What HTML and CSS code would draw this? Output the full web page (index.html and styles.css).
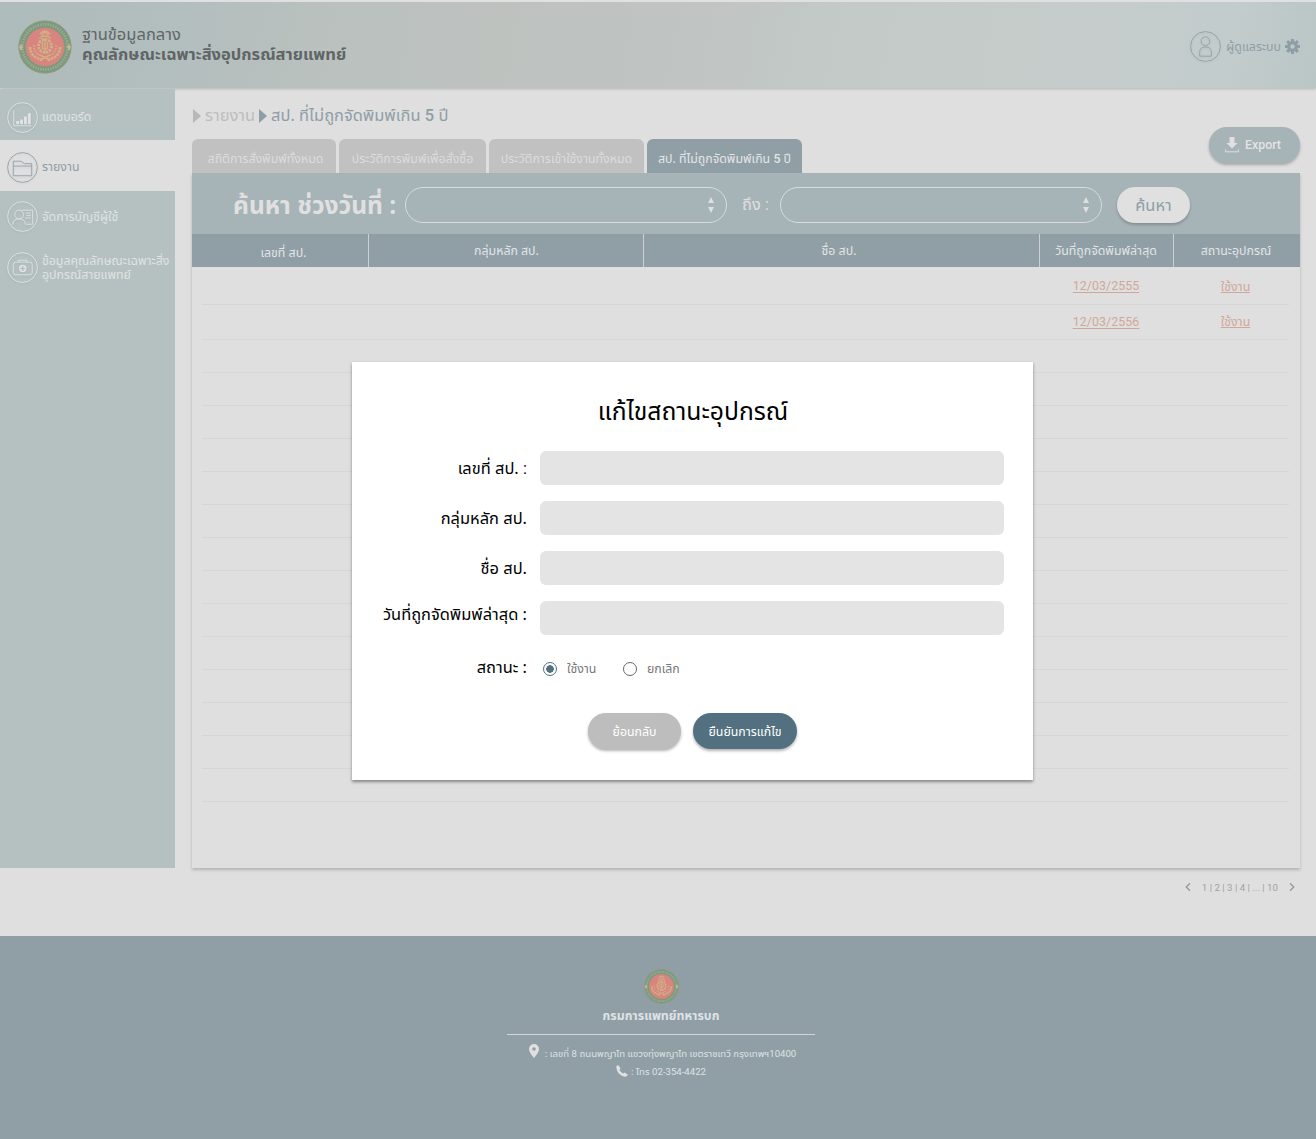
FILE: index.html
```html
<!DOCTYPE html>
<html lang="th">
<head>
<meta charset="utf-8">
<title>แก้ไขสถานะอุปกรณ์</title>
<link rel="stylesheet" href="styles.css">
</head>
<body>
<svg width="0" height="0" class="defs" aria-hidden="true">
  <symbol id="emblem" viewBox="0 0 54 54">
    <circle cx="27" cy="27" r="26.5" fill="#799880"/>
    <circle cx="27" cy="27" r="26" fill="none" stroke="#969f78" stroke-width=".8"/>
    <circle cx="27" cy="27" r="22.6" fill="none" stroke="#b2b591" stroke-width="3" stroke-dasharray="1.5 1.1" pathLength="142" opacity=".62"/>
    <circle cx="27" cy="27" r="19.3" fill="#d98480" stroke="#a69777" stroke-width=".7"/>
    <path d="M3 24l2 3-2 4-2-4zM51 24l2 3-2 4-2-4z" fill="#c2b891"/>
    <g fill="none" stroke="#cfb184" stroke-width="1.4">
      <path d="M22 14q5-6 10 0M23.500 15.500l3.500-4 3.500 4M21 18.500q6-5 12 0"/>
      <circle cx="27" cy="26" r="6.500" stroke-width="3" stroke-dasharray="2.400 .9"/>
      <path d="M27 18v15M24.500 22v6q2.500 3 5 0v-6"/>
      <path d="M12 27q0 10 13 13M42 27q0 10-13 13" stroke-width="2.800" stroke-dasharray="2.600 .8"/>
      <path d="M16 25q-1 8 8 11M38 25q1 8-8 11" stroke-dasharray="2 .8"/>
      <path d="M22 35l10 5M32 35l-10 5"/>
    </g>
  </symbol>
</svg>

<header class="header">
  <svg class="header-logo"><use href="#emblem"/></svg>
  <div class="brand"><div class="brand-top">ฐานข้อมูลกลาง</div><div class="brand-name">คุณลักษณะเฉพาะสิ่งอุปกรณ์สายแพทย์</div></div>
  <div class="user">
    <svg class="circle-icon" viewBox="0 0 32 32"><circle cx="16" cy="16" r="15.400"/><circle cx="16" cy="10.500" r="4.500"/><path d="M10 26v-4q0-5.500 6-5.500t6 5.500V26z"/></svg>
    <span class="user-name">ผู้ดูแลระบบ</span>
    <svg class="gear" viewBox="0 0 16 16"><circle cx="8" cy="8" r="4.100" fill="none" stroke="#8e9ea6" stroke-width="3.400"/><path d="M8 0v3M8 13v3M0 8h3M13 8h3M2.300 2.300l2.100 2.100M11.600 11.600l2.100 2.100M2.300 13.700l2.100-2.100M11.600 4.400l2.100-2.100" stroke="#8e9ea6" stroke-width="3.200"/></svg>
  </div>
</header>

<div class="body">
  <nav class="sidebar">
    <a class="nav nav-first">
      <svg class="circle-icon" viewBox="0 0 32 32"><circle cx="16" cy="16" r="15.400"/><path d="M7 9v15.500H25"/><path class="solid" d="M9.500 19.500h3v3.500h-3zM13.500 18h3v5h-3zM17.500 15h3v8h-3zM21.500 11.500h3V23h-3z"/></svg>
      <span>แดชบอร์ด</span></a>
    <a class="nav nav-active">
      <svg class="circle-icon" viewBox="0 0 32 32"><circle cx="16" cy="16" r="15.400"/><path d="M6.500 24.500v-15H14.500l3.500 2.500h7.500v12.500zM6.500 14.500h19"/></svg>
      <span>รายงาน</span></a>
    <a class="nav nav-users">
      <svg class="circle-icon" viewBox="0 0 32 32"><circle cx="16" cy="16" r="15.400"/><circle cx="12.500" cy="14" r="4.500"/><path d="M6 24.500q0-6 6.500-6t6.500 6M15.500 9.500H26.500V24H20M19.500 12.500h5M20 15h4.500M19 17.500h5.500"/></svg>
      <span>จัดการบัญชีผู้ใช้</span></a>
    <a class="nav nav-kit">
      <svg class="circle-icon" viewBox="0 0 32 32"><circle cx="16" cy="16" r="15.400"/><rect x="6.500" y="10.500" width="19.500" height="13" rx="2.500"/><path d="M12 10.500V8.500h8.500v2"/><circle class="solid" cx="16.200" cy="17" r="3.900"/><path class="cut" d="M16.200 14.500v5M13.700 17h5"/></svg>
      <span>ข้อมูลคุณลักษณะเฉพาะสิ่ง<br>อุปกรณ์สายแพทย์</span></a>
  </nav>

  <main class="main">
    <div class="crumbs"><i class="tri"></i><span class="crumb-a">รายงาน</span><i class="tri tri-dark"></i><span class="crumb-b">สป. ที่ไม่ถูกจัดพิมพ์เกิน <b>5</b> ปี</span></div>
    <div class="tabbar">
      <div class="tab t1"><span>สถิติการสั่งพิมพ์ทั้งหมด</span></div>
      <div class="tab t2"><span>ประวัติการพิมพ์เพื่อสั่งซื้อ</span></div>
      <div class="tab t3"><span>ประวัติการเข้าใช้งานทั้งหมด</span></div>
      <div class="tab t4"><span>สป. ที่ไม่ถูกจัดพิมพ์เกิน <b>5</b> ปี</span></div>
      <button class="export"><svg viewBox="0 0 14 16"><path d="M4.500 0h5v6h3.200L7 11.500 1.300 6h3.200z" fill="#e0e0e0"/><path d="M.6 12.500v2.300h12.800v-2.300" fill="none" stroke="#e0e0e0"/></svg><span>Export</span></button>
    </div>
    <section class="panel">
      <div class="search">
        <span class="search-title">ค้นหา ช่วงวันที่ :</span>
        <div class="select"><i class="up"></i><i class="down"></i></div>
        <span class="to">ถึง <span class="colon">:</span></span>
        <div class="select"><i class="up"></i><i class="down"></i></div>
        <button class="find"><span>ค้นหา</span></button>
      </div>
      <div class="thead grid"><div class="h1"><span>เลขที่ สป.</span></div><div class="h2"><span>กลุ่มหลัก สป.</span></div><div class="h3"><span>ชื่อ สป.</span></div><div class="h4"><span>วันที่ถูกจัดพิมพ์ล่าสุด</span></div><div class="h5"><span>สถานะอุปกรณ์</span></div></div>
      <div class="rows">
        <div class="row tall grid"><a class="date">12/03/2555</a><a class="use">ใช้งาน</a></div>
        <div class="row second grid"><a class="date">12/03/2556</a><a class="use">ใช้งาน</a></div>
        <div class="row"></div><div class="row"></div><div class="row"></div><div class="row"></div><div class="row"></div><div class="row"></div><div class="row"></div><div class="row"></div><div class="row"></div><div class="row"></div><div class="row"></div><div class="row"></div><div class="row"></div><div class="row"></div>
      </div>
    </section>
    <div class="pager"><svg viewBox="0 0 6 8"><path d="M5 .3L1.300 4 5 7.700"/></svg><span>1 | 2 | 3 | 4 | ... | 10</span><svg viewBox="0 0 6 8"><path d="M1 .3L4.700 4 1 7.700"/></svg></div>
  </main>
</div>

<footer class="footer">
  <svg class="footer-logo"><use href="#emblem"/></svg>
  <div class="dept">กรมการแพทย์ทหารบก</div>
  <div class="rule"></div>
  <div class="contact"><svg class="pin" viewBox="0 0 10 14"><path fill-rule="evenodd" d="M5 0a5 5 0 0 1 5 5c0 3.500-5 9-5 9S0 8.500 0 5a5 5 0 0 1 5-5zm0 3.200a1.800 1.800 0 1 0 0 3.600 1.800 1.800 0 0 0 0-3.600z"/></svg><span class="addr">: เลขที่ <i class="num">8</i> ถนนพญาไท แขวงทุ่งพญาไท เขตราชเทวี กรุงเทพฯ<i class="num">10400</i></span></div>
  <div class="contact phone-line"><svg class="phone" viewBox="0 0 12 12"><path d="M.3 1.500Q1 .2 2.500.2L4.500 3.500 3.400 4.900Q4.800 7.300 7.100 8.600L8.500 7.500 11.800 9.500Q11.700 11.500 9.500 11.800C4.500 11.500.2 6.500.3 1.500z"/></svg><span class="tel">: โทร <i class="num">02-354-4422</i></span></div>
</footer>

<div class="modal">
  <h1><span>แก้ไขสถานะอุปกรณ์</span></h1>
  <div class="field"><label>เลขที่ สป. <span class="colon">:</span></label><div class="input"></div></div>
  <div class="field"><label>กลุ่มหลัก สป.</label><div class="input"></div></div>
  <div class="field"><label>ชื่อ สป.</label><div class="input"></div></div>
  <div class="field"><label class="l4">วันที่ถูกจัดพิมพ์ล่าสุด :</label><div class="input"></div></div>
  <div class="field status"><label>สถานะ :</label><i class="radio on"></i><span class="o1">ใช้งาน</span><i class="radio"></i><span class="o2">ยกเลิก</span></div>
  <div class="actions"><button class="back"><span>ย้อนกลับ</span></button><button class="confirm"><span>ยืนยันการแก้ไข</span></button></div>
</div>
</body>
</html>
```
FILE: styles.css
```css
* { box-sizing: border-box; }
body { margin: 0; width: 1316px; height: 1139px; overflow: hidden; position: relative; background: #dfdfdf; font-family: "Noto Sans Thai", "Noto Sans", sans-serif; font-size: 12.350px; color: #fff; }
span, label, a { white-space: nowrap; }
b { font-family: Roboto, sans-serif; font-weight: 500; }
button { border: 0; padding: 0; font: inherit; color: inherit; display: flex; align-items: center; justify-content: center; }
.defs { display: block; height: 0; }
.colon, .num { font-family: Roboto, sans-serif; font-weight: 400; font-style: normal; }
.header { height: 88px; margin-bottom: 1px; border-top: 2px solid #e0e0e0; display: flex; align-items: flex-start; padding-left: 18px; background: linear-gradient(100deg, #aebbbb 0%, #b3bebe 14%, #bbc1be 27%, #bfc3c1 50%, #c3cac7 64%, #c5cccb 84%, #c2cccc 93%, #bac5c5 100%); box-shadow: 0 1px 3px rgba(0,0,0,.2); }
.header-logo { width: 54px; height: 54px; margin-top: 18px; }
.brand { margin: 23px 0 0 10px; color: #606565; line-height: 19.500px; font-size: 16.500px; }
.brand-name { font-weight: 700; }
.user { margin: 29px 16px 0 auto; display: flex; align-items: center; color: #8e9ea6; }
.circle-icon { width: 31px; height: 31px; flex: none; fill: none; stroke: currentColor; stroke-width: .9; filter: drop-shadow(0 1px 1px rgba(0,0,0,.08)); }
.circle-icon .solid { fill: currentColor; stroke: none; }
.circle-icon .cut { stroke: #b5c1c1; stroke-width: 1.500; }
.user-name { margin: 1px 4px 0 5px; font-size: 12.350px; }
.gear { width: 15px; height: 15px; }
.body { display: flex; height: 847px; }
.sidebar { width: 175px; height: 779px; background: #b5c1c1; color: #dfe3e3; flex: none; }
.nav { display: flex; align-items: center; padding-left: 7px; gap: 4px; height: 50px; line-height: 14px; }
.nav-first { height: 51px; padding-top: 6px; }
.nav-active { height: 51px; background: #dfdfdf; color: #8e9ea6; padding-top: 3px; }
.nav-active span, .nav-users span { padding-top: 2px; }
.nav-users { height: 51px; }
.nav-kit { height: 50px; }
.nav-kit span { padding-top: 4px; }
.main { width: 1108px; margin-left: 17px; }
.crumbs { height: 50px; display: flex; align-items: center; font-size: 16.450px; padding-top: 3px; }
.tri { width: 0; height: 0; border: 7px solid transparent; border-left: 8px solid #b8b8b8; border-right: 0; margin: 0 4px 0 1px; }
.tri-dark { border-left-color: #8e9ea6; margin: 0 4px 0 4px; }
.crumb-a { color: #bdbdbd; }
.crumb-b { color: #8e9ea6; }
.tabbar { display: flex; height: 34px; gap: 3px; }
.tab { height: 34px; border-radius: 6px 6px 0 0; background: #c1c1c1; color: #dcdcdc; display: flex; align-items: center; justify-content: center; padding-top: 7px; }
.t1 { width: 144px; padding-left: 3px; }
.t2 { width: 147px; }
.t3 { width: 155px; }
.t4 { width: 155px; background: #909ea6; color: #e3e6e8; }
.export { margin: -12px 0 0 auto; width: 91px; height: 36px; border-radius: 18px; background: #a6b3b7; box-shadow: 0 2px 3px rgba(0,0,0,.25); gap: 6px; font-family: Roboto, sans-serif; font-weight: 500; font-size: 12.350px; color: #e3e3e3; padding: 0 3px 1px 0; }
.export svg { width: 14px; height: 16px; }
.panel { height: 695px; box-shadow: 0 2px 3px rgba(0,0,0,.2); }
.search { height: 61px; background: #a6b3b7; display: flex; align-items: center; padding: 2px 0 0 41px; color: #e0e0e0; }
.search-title { font-size: 24.600px; font-weight: 700; width: 172px; padding-top: 4px; }
.select { width: 322px; height: 36px; border: 1px solid #d8dcdd; border-radius: 18px; display: flex; flex-direction: column; gap: 4px; align-items: flex-end; justify-content: center; padding-right: 12px; }
.up, .down { border: 3.500px solid transparent; width: 0; height: 0; }
.up { border-bottom: 6px solid #e0e0e0; border-top: 0; }
.down { border-top: 6px solid #e0e0e0; border-bottom: 0; }
.to { width: 53px; padding-left: 15px; font-size: 16.450px; }
.find { width: 73px; height: 36px; margin-left: 15px; border-radius: 18px; background: #e0e0e0; color: #8e9ea6; font-size: 16.450px; box-shadow: 0 2px 3px rgba(0,0,0,.2); }
.find span { padding-top: 2px; }
.grid { display: grid; grid-template-columns: 176px 275px 396px 134px 127px; }
.thead { height: 33px; background: #909ea6; color: #e2e5e7; }
.thead div { display: flex; align-items: center; justify-content: center; border-left: 1px solid #c9cfd2; padding-top: 1px; }
.thead .h1 { border-left: 0; padding: 5px 0 0 7px; }
.thead .h2 { padding: 2px 0 0 1px; }
.thead .h3 { padding-right: 5px; }
.thead .h4 { padding-right: 1px; }
.thead .h5 { padding-right: 2px; }
.rows { padding: 0 11px 0 10px; }
.row { height: 33px; border-bottom: 1px solid #d6d6d6; }
.tall { height: 38px; }
.second { height: 35px; }
.row.grid { grid-template-columns: 837px 134px 125px; color: #d1a799; align-items: center; justify-items: center; }
.date { grid-column: 2; font-family: Roboto, sans-serif; font-size: 12.350px; letter-spacing: .1px; text-decoration: underline; text-underline-offset: 2px; }
.tall .date { padding-top: 1px; }
.tall .use { padding-top: 3px; }
.use { grid-column: 3; text-decoration: underline; text-decoration-thickness: 1px; }
.pager { display: flex; align-items: center; justify-content: flex-end; height: 38px; color: #9f9f9f; font-family: Roboto, sans-serif; font-size: 9.700px; gap: 11px; padding-right: 5px; }
.pager svg { width: 6px; height: 8px; fill: none; stroke: #999; stroke-width: 1.400; }
.footer { height: 203px; background: #909ea6; display: flex; flex-direction: column; align-items: center; color: #dfe3e5; padding: 33px 0 0 6px; }
.footer-logo { width: 35px; height: 35px; }
.dept { height: 30px; line-height: 26px; font-weight: 700; }
.rule { width: 308px; height: 1px; background: #d0d5d8; }
.contact { display: flex; align-items: center; font-size: 9.600px; height: 18px; margin: 9px 0 0 3px; gap: 6px; }
.contact svg { fill: #e0e0e0; }
.contact span { padding-top: 2px; }
.phone-line { margin: 0; gap: 3px; }
.pin { width: 10px; height: 14px; margin-top: -4px; }
.phone { width: 12px; height: 12px; }
.modal { position: absolute; left: 352px; top: 362px; width: 681px; height: 418px; background: #fff; color: #000; box-shadow: 0 2px 3px rgba(0,0,0,.4); }
.modal h1 { margin: 0; height: 89px; display: flex; justify-content: center; align-items: center; padding: 12px 0 0 1px; font-size: 24.700px; font-weight: 400; }
.field { height: 34px; margin-bottom: 16px; display: flex; align-items: center; }
.field label { width: 175px; margin-right: 13px; text-align: right; font-size: 16.450px; padding-top: 1px; }
.input { width: 464px; height: 34px; border-radius: 6px; background: #e4e4e4; }
.field .l4 { padding: 0 0 6px; }
.status { color: #777; padding-top: 2px; }
.status label { color: #000; padding: 0 0 2px; }
.status span { padding-top: 1px; }
.radio { width: 14px; height: 14px; border: 1.500px solid #666; border-radius: 50%; margin-left: 3px; }
.radio.on { border-color: #527080; background: radial-gradient(#527080 0 3.500px, #fff 4px); }
.o1 { width: 53px; margin-left: 10px; }
.o2 { margin-left: 10px; }
.actions { display: flex; justify-content: center; gap: 12px; padding-top: 12px; color: #fff; }
.actions button { height: 36px; border-radius: 18px; box-shadow: 0 2px 3px rgba(0,0,0,.3); }
.actions span { padding-top: 3px; }
.back { width: 93px; background: #bdbdbd; }
.confirm { width: 104px; background: #527080; }
```
